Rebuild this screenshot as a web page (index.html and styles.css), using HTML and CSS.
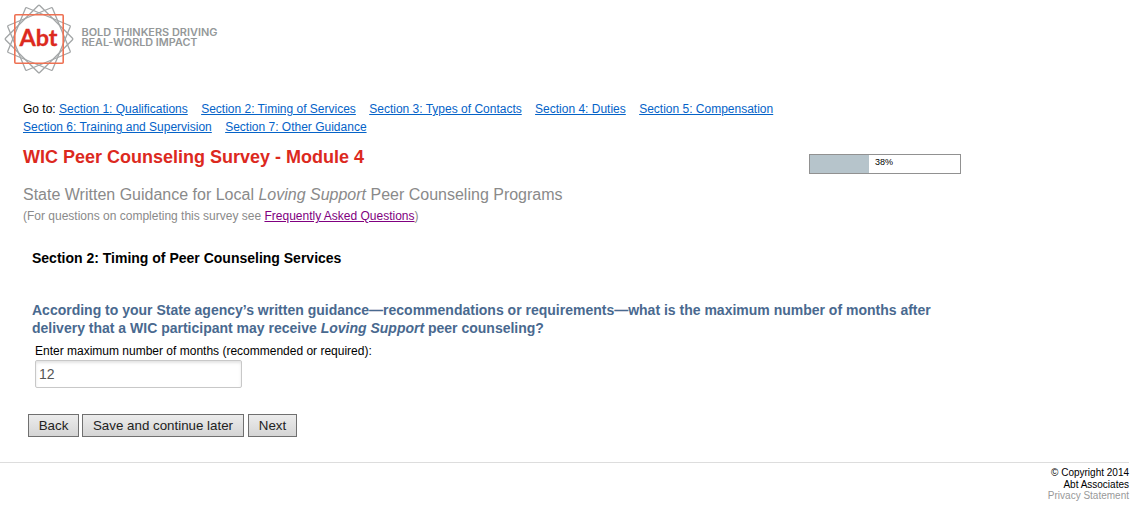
FILE: index.html
```html
<!DOCTYPE html>
<html lang="en">
<head>
    <meta charset="UTF-8">
    <title>WIC Peer Counseling Survey - Module 4</title>
    <link rel="stylesheet" href="styles.css">
</head>
<body>
    <header class="header">
        <svg class="logo" width="230" height="80" viewBox="0 0 230 80">
            <g fill="none" stroke="#a3a6a7" stroke-width="1.3">
                <rect x="14.8" y="14.8" width="48.4" height="48.4" rx="1" transform="rotate(22.5 39 39)"/>
                <rect x="14.8" y="14.8" width="48.4" height="48.4" rx="1" transform="rotate(45 39 39)"/>
                <rect x="14.8" y="14.8" width="48.4" height="48.4" rx="1" transform="rotate(67.5 39 39)"/>
                <rect x="14.8" y="14.8" width="48.4" height="48.4" rx="1" stroke="#ee7153" stroke-width="1.6"/>
            </g>
            <text class="logo-name" x="19.5" y="45.7" textLength="38" lengthAdjust="spacingAndGlyphs">Abt</text>
            <text class="logo-tag" x="81.5" y="35.8" textLength="136" lengthAdjust="spacingAndGlyphs">BOLD THINKERS DRIVING</text>
            <text class="logo-tag" x="81.5" y="45.8" textLength="116" lengthAdjust="spacingAndGlyphs">REAL-WORLD IMPACT</text>
        </svg>
    </header>

    <div class="container">
        <nav class="sections">
            Go to:
            <a href="#">Section 1: Qualifications</a>
            <a href="#">Section 2: Timing of Services</a>
            <a href="#">Section 3: Types of Contacts</a>
            <a href="#">Section 4: Duties</a>
            <a href="#">Section 5: Compensation</a>
            <a href="#">Section 6: Training and Supervision</a>
            <a href="#">Section 7: Other Guidance</a>
        </nav>

        <div class="title-row">
            <h1>WIC Peer Counseling Survey - Module 4</h1>
            <div class="progress">
                <div class="progress-bar" style="width: 59px"></div>
                <span class="progress-text">38%</span>
            </div>
        </div>
        <p class="subtitle">State Written Guidance for Local <em>Loving Support</em> Peer Counseling Programs</p>
        <p class="faq">(For questions on completing this survey see <a href="#">Frequently Asked Questions</a>)</p>

        <form class="survey">
            <h2>Section 2: Timing of Peer Counseling Services</h2>
            <p class="question">According to your State agency’s written guidance—recommendations or requirements—what is the maximum number of months after<br>delivery that a WIC participant may receive <em>Loving Support</em> peer counseling?</p>
            <label for="months">Enter maximum number of months (recommended or required):</label>
            <input type="text" id="months" value="12">
            <div class="buttons">
                <button type="button" class="btn-back">Back</button>
                <button type="button" class="btn-save">Save and continue later</button>
                <button type="button" class="btn-next">Next</button>
            </div>
        </form>
    </div>

    <footer class="footer">
        <div>© Copyright 2014</div>
        <div>Abt Associates</div>
        <a href="#">Privacy Statement</a>
    </footer>
</body>
</html>
```
FILE: styles.css
```css
body {
    font-family: "Liberation Sans", Arial, sans-serif;
    font-size: 12px;
    margin: 0;
    color: #000;
    background: #fff;
}
h1, h2, p {
    margin: 0;
}
.header {
    height: 100px;
}
.logo {
    display: block;
}
.logo-name {
    font-family: Lato, sans-serif;
    font-size: 23.5px;
    font-weight: bold;
    fill: #dc2a1e;
    stroke: #dc2a1e;
    stroke-width: 0.3;
}
.logo-tag {
    font-family: Inter, sans-serif;
    font-size: 10px;
    font-weight: 600;
    fill: #949899;
}
.container {
    width: 938px;
    padding-left: 23px;
}
.sections {
    width: 780px;
    line-height: 18px;
}
.sections a {
    color: #0563c8;
    margin-right: 10px;
    white-space: nowrap;
}
.title-row {
    display: flex;
    justify-content: space-between;
    height: 39px;
    padding-top: 10px;
}
h1 {
    font-size: 18px;
    line-height: 22px;
    color: #dc291e;
}
.progress {
    display: flex;
    box-sizing: border-box;
    width: 152px;
    height: 20px;
    margin-top: 8px;
    border: 1px solid #919191;
}
.progress-bar {
    background: #b6c4cb;
}
.progress-text {
    font-size: 9px;
    line-height: 14px;
    margin-left: 6px;
}
.subtitle {
    font-size: 16px;
    line-height: 20px;
    color: #8a8a8a;
}
.faq {
    line-height: 14px;
    margin-top: 4px;
    color: #8a8a8a;
}
.faq a {
    color: #800080;
}
.survey {
    padding: 26px 0 0 9px;
}
h2 {
    font-size: 14px;
    line-height: 18px;
}
.question {
    font-size: 14px;
    font-weight: bold;
    line-height: 18px;
    margin-top: 34px;
    color: #49698f;
}
label {
    display: block;
    line-height: 14px;
    margin: 7px 0 0 3px;
}
input {
    display: block;
    box-sizing: border-box;
    width: 207px;
    height: 28px;
    margin: 2px 0 0 3px;
    padding: 0 3px;
    border: 1px solid #c8c8c8;
    border-radius: 2px;
    box-shadow: inset 0 2px 3px #e4e4e4;
    font-family: "Liberation Sans", Arial, sans-serif;
    font-size: 14px;
    color: #555;
}
.buttons {
    display: flex;
    gap: 3px;
    margin: 26px 0 0 -4px;
}
button {
    height: 23px;
    padding: 0;
    border: 1px solid #707070;
    background: linear-gradient(#ececec, #d5d5d5);
    font-family: "Liberation Sans", Arial, sans-serif;
    font-size: 13.33px;
    color: #222;
}
.btn-back {
    width: 51px;
}
.btn-save {
    width: 162px;
}
.btn-next {
    width: 49px;
    margin-left: 1px;
}
.footer {
    width: 1129px;
    margin-top: 25px;
    padding-top: 4px;
    border-top: 1px solid #ddd;
    font-size: 10px;
    line-height: 12px;
    text-align: right;
}
.footer a {
    display: block;
    line-height: 10px;
    color: #999;
    text-decoration: none;
}
```
